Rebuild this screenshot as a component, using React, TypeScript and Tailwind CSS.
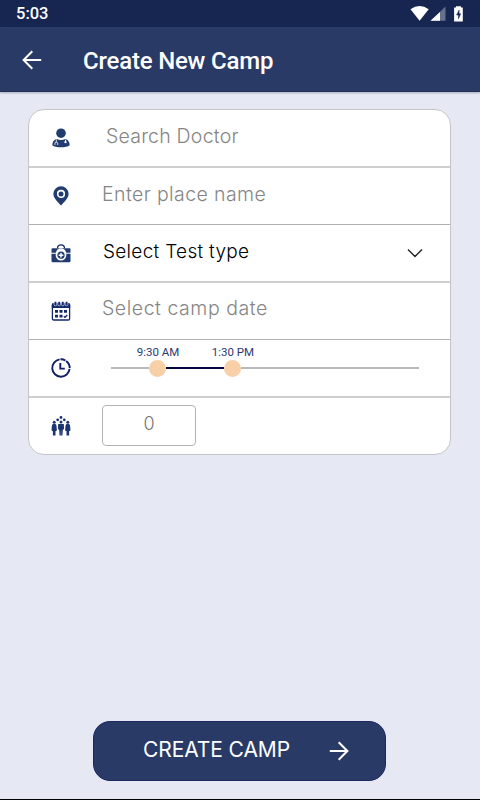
import { useState } from 'react';
import type { ReactNode } from 'react';

function DoctorIcon() {
  return (
    <svg width="18" height="20" viewBox="0 0 18 20" aria-hidden="true">
      <circle cx="9" cy="5.2" r="4.8" fill="#233c70" />
      <path d="M4.6 11Q9 12.8 13.4 11C16.2 11.8 17.7 14 17.7 17.2Q15 19.3 9 19.3T.3 17.2C.3 14 1.8 11.8 4.6 11Z" fill="#233c70" />
      <path d="M4.3 11.5v2.2M2.9 16.9v-1.3a1.4 1.4 0 0 1 2.8 0v1.3M13.5 11.5v2" fill="none" stroke="#fff" strokeWidth=".9" />
      <circle cx="13.5" cy="14.1" r="1.2" fill="#fff" />
    </svg>
  );
}

function PinIcon() {
  return (
    <svg width="16" height="20" viewBox="0 0 16 20" aria-hidden="true">
      <path d="M8 .3A7.6 7.6 0 0 0 .4 7.8C.4 12.5 4.9 16 8 19.5c3.1-3.5 7.6-7 7.6-11.7A7.6 7.6 0 0 0 8 .3Z" fill="#233c70" />
      <circle cx="8" cy="7.9" r="3.3" fill="none" stroke="#fff" strokeWidth="1.6" />
    </svg>
  );
}

function KitIcon() {
  return (
    <svg width="20" height="19" viewBox="0 0 20 19" aria-hidden="true">
      <path d="M6.5 4.3C6.5 2 7.9.9 10 .9s3.5 1.1 3.5 3.4" fill="none" stroke="#12286c" strokeWidth="1.3" />
      <path d="M1.5 4.2h17q1 0 1 1v3.6h-4.3a5.3 5.3 0 0 0-10.4 0H.5V5.2q0-1 1-1Z" fill="#233c70" />
      <path d="M.5 9.7h4.3a5.4 5.4 0 0 0 10.4 0h4.3V17q0 1.3-1.3 1.3H1.8Q.5 18.3.5 17Z" fill="#233c70" />
      <circle cx="10" cy="11.2" r="4.5" fill="#233c70" stroke="#fff" strokeWidth="1.7" />
      <path d="M10 8.9v4.6M7.700 11.2h4.6" stroke="#fff" strokeWidth="1.5" />
    </svg>
  );
}

function CalendarIcon() {
  return (
    <svg width="20" height="20" viewBox="0 0 20 20" aria-hidden="true">
      <rect x="1.4" y="2.7" width="17.2" height="16.3" rx="1.3" fill="#fff" stroke="#12286c" strokeWidth="1.3" />
      <path d="M.8 7V3.9q0-1.3 1.3-1.3h15.8q1.3 0 1.3 1.3V7Z" fill="#12286c" />
      <g fill="#12286c" stroke="#fff" strokeWidth=".6">
        <rect x="3.1" y=".4" width="2.7" height="4.4" rx="1.3" />
        <rect x="6.8" y=".4" width="2.7" height="4.4" rx="1.3" />
        <rect x="10.5" y=".4" width="2.7" height="4.4" rx="1.3" />
        <rect x="14.2" y=".4" width="2.7" height="4.4" rx="1.3" />
      </g>
      <path d="M4 9h3v2.8H4zM8.5 9h3v2.8h-3zM13 9h3v2.8h-3zM4 13.7h3v2.8H4zM8.5 13.7h3v2.8h-3z" fill="#12286c" />
      <path d="m12.8 15.2 1.2 1.1 2.3-2.3" fill="none" stroke="#12286c" strokeWidth="1.3" />
    </svg>
  );
}

function ClockIcon() {
  return (
    <svg width="20" height="20" viewBox="0 0 20 20" fill="none" stroke="#0f1f66" strokeWidth="1.9" aria-hidden="true">
      <path d="M18.6 10.900A8.700 8.700 0 1 1 8.600 1.400" />
      <path d="M9.500 1.300A8.700 8.700 0 0 1 14.400 2.500M15.100 3A8.700 8.700 0 0 1 18.700 9.900" />
      <path d="M9.300 5v5.600h4.500" />
    </svg>
  );
}

function PeopleIcon() {
  return (
    <svg width="20" height="20" viewBox="0 0 20 20" fill="#1c3470" aria-hidden="true">
      <circle cx="10" cy="1.500" r="1.400" />
      <circle cx="6.700" cy="3.800" r="1.400" />
      <circle cx="13.300" cy="3.800" r="1.400" />
      <circle cx="3.200" cy="6.200" r="1.500" />
      <circle cx="10" cy="6" r="1.500" />
      <circle cx="16.800" cy="6.200" r="1.500" />
      <path d="M2.300 8.100h1.800q1.200 0 1.400 1.700l.4 4.600-1.400.8v4.300H1.900v-4.300l-1.400-.8.400-4.600q.2-1.700 1.400-1.700ZM15.900 8.100h1.800q1.200 0 1.400 1.700l.4 4.600-1.400.8v4.300h-2.600v-4.300l-1.400-.8.400-4.600q.2-1.700 1.400-1.700Z" />
      <path d="M7.200 8.100h5.600l.3 5.100-1.200.3-.5 6H8.600l-.5-6-1.200-.3Z" />
      <path d="M10 14.500v5" stroke="#fff" strokeOpacity=".5" strokeWidth=".5" />
    </svg>
  );
}

function StatusBar() {
  return (
    <div className="flex h-[27px] shrink-0 items-center justify-between bg-[#172650] pl-4 pr-[16px]">
      <span className="pt-px font-['Roboto',sans-serif] text-[16.5px] font-medium leading-none text-white">5:03</span>
      <svg width="54" height="18" viewBox="0 0 54 18" aria-hidden="true">
        <path d="M.5 4.3Q9.6-2.5 18.7 4.3L9.6 15.8Z" fill="#fff" />
        <path d="M35.5 1.5v14.3H20.8Z" fill="#66718d" />
        <path d="M30 6.900v8.900h-9.500Z" fill="#fff" />
        <path d="M46 1.200h5v1.300h1.800V16.500h-8.700V2.500H46Z" fill="#fff" />
        <path d="M49.200 5 46.600 10h1.800v3.800l2.300-5h-1.600V5Z" fill="#172650" stroke="#172650" strokeWidth=".5" />
      </svg>
    </div>
  );
}

function Row({ icon, children }: { icon: ReactNode; children: ReactNode }) {
  return (
    <div className="flex h-[57px] shrink-0 border-b border-[#b0b0b0] odd:h-[58px] odd:border-b-2 odd:border-[#cfcfcf] last:h-auto last:flex-1 last:border-b-0">
      <div className="flex w-[64px] shrink-0 items-center justify-center">{icon}</div>
      {children}
    </div>
  );
}

const inputClass =
  'min-w-0 flex-1 bg-transparent pb-0.5 font-light text-[#858585] outline-none placeholder:text-[#858585] placeholder:opacity-100';

export default function App() {
  const [doctor, setDoctor] = useState('');
  const [place, setPlace] = useState('');
  const [date, setDate] = useState('');
  const [count, setCount] = useState('');

  return (
    <div className="flex h-[800px] w-[480px] flex-col border-b border-black bg-[#e6e9f3] font-['Inter',sans-serif]">
      <StatusBar />

      <header className="flex h-[65px] shrink-0 items-center border-b border-[#263357] bg-[#2a3a66] pl-[22px] pt-px shadow-[0_1px_2px_rgba(40,50,80,0.35)]">
        <button type="button" aria-label="Back" className="w-[61px]">
          <svg width="20" height="20" viewBox="0 0 20 20" fill="none" stroke="#fff" strokeWidth="2">
            <path d="M19.2 10H2M10.3 1.3 1.6 10l8.7 8.7" />
          </svg>
        </button>
        <h1 className="pt-[2px] font-['Roboto',sans-serif] text-[24px] font-medium leading-none tracking-[-0.2px] text-white">
          Create New Camp
        </h1>
      </header>

      <main className="flex flex-1 flex-col">
        <div className="ml-[28px] mt-[17px] flex h-[346px] w-[423px] flex-col overflow-hidden rounded-[16px] border border-[#c4c5c9] bg-white">
          <Row icon={<DoctorIcon />}>
            <input
              value={doctor}
              onChange={(e) => setDoctor(e.target.value)}
              placeholder="Search Doctor"
              className={`${inputClass} pl-[13px] text-[19.5px] tracking-[0.22px]`}
            />
          </Row>
          <Row icon={<PinIcon />}>
            <input
              value={place}
              onChange={(e) => setPlace(e.target.value)}
              placeholder="Enter place name"
              className={`${inputClass} pl-[9px] text-[19.5px] tracking-[0.4px]`}
            />
          </Row>
          <Row icon={<KitIcon />}>
            <button type="button" className="flex flex-1 items-center justify-between pl-[10px] pr-[27px] text-black">
              <span className="pb-0.5 text-[19px] font-light tracking-[0.3px]">Select Test type</span>
              <svg width="16" height="10" viewBox="0 0 16 10" fill="none" stroke="#222" strokeWidth="1.4" aria-hidden="true">
                <path d="m1 1.5 7 7 7-7" />
              </svg>
            </button>
          </Row>
          <Row icon={<CalendarIcon />}>
            <input
              value={date}
              onChange={(e) => setDate(e.target.value)}
              placeholder="Select camp date"
              className={`${inputClass} pb-1 pl-[9px] text-[19.5px] tracking-[0.54px]`}
            />
          </Row>
          <Row icon={<ClockIcon />}>
            <div className="ml-[18px] w-[308px] pt-[5px] font-['Roboto',sans-serif]">
              <div className="flex pl-[17px] text-[11.5px] leading-[14px] text-[#2a3a70]">
                <span className="w-[60px] text-center">9:30 AM</span>
                <span className="ml-[15px] w-[60px] text-center">1:30 PM</span>
              </div>
              {/* Time range */}
              <div className="flex h-[18px] items-center">
                <div className="h-[2px] w-[38px] bg-[#b9b9b9]" />
                <div className="size-[17px] rounded-full bg-[#f8d0a8]" />
                <div className="h-[2px] w-[58px] bg-[#06043c]" />
                <div className="size-[17px] rounded-full bg-[#f8d0a8]" />
                <div className="h-[2px] flex-1 bg-[#b9b9b9]" />
              </div>
            </div>
          </Row>
          <Row icon={<PeopleIcon />}>
            <div className="flex items-center pb-[2px] pl-[9px]">
              <input
                value={count}
                onChange={(e) => setCount(e.target.value)}
                placeholder="0"
                className="h-[41px] w-[94px] rounded-[4px] border border-[#b3b3b3] pb-1 text-center text-[18px] font-light outline-none placeholder:text-[#777] placeholder:opacity-100"
              />
            </div>
          </Row>
        </div>

        <button
          type="button"
          className="mb-[18px] ml-[93px] mt-auto flex h-[60px] w-[293px] items-center rounded-[17px] border border-[#1d2860] bg-[#2a3a66] pl-[49px] text-white"
        >
          <span className="w-[186px] pb-0.5 text-left text-[21px] tracking-[-0.1px]">CREATE CAMP</span>
          <svg width="20" height="20" viewBox="0 0 20 20" fill="none" stroke="#fff" strokeWidth="2" aria-hidden="true">
            <path d="M.8 10H18M9.7 1.3l8.7 8.7-8.700 8.700" />
          </svg>
        </button>
      </main>
    </div>
  );
}
